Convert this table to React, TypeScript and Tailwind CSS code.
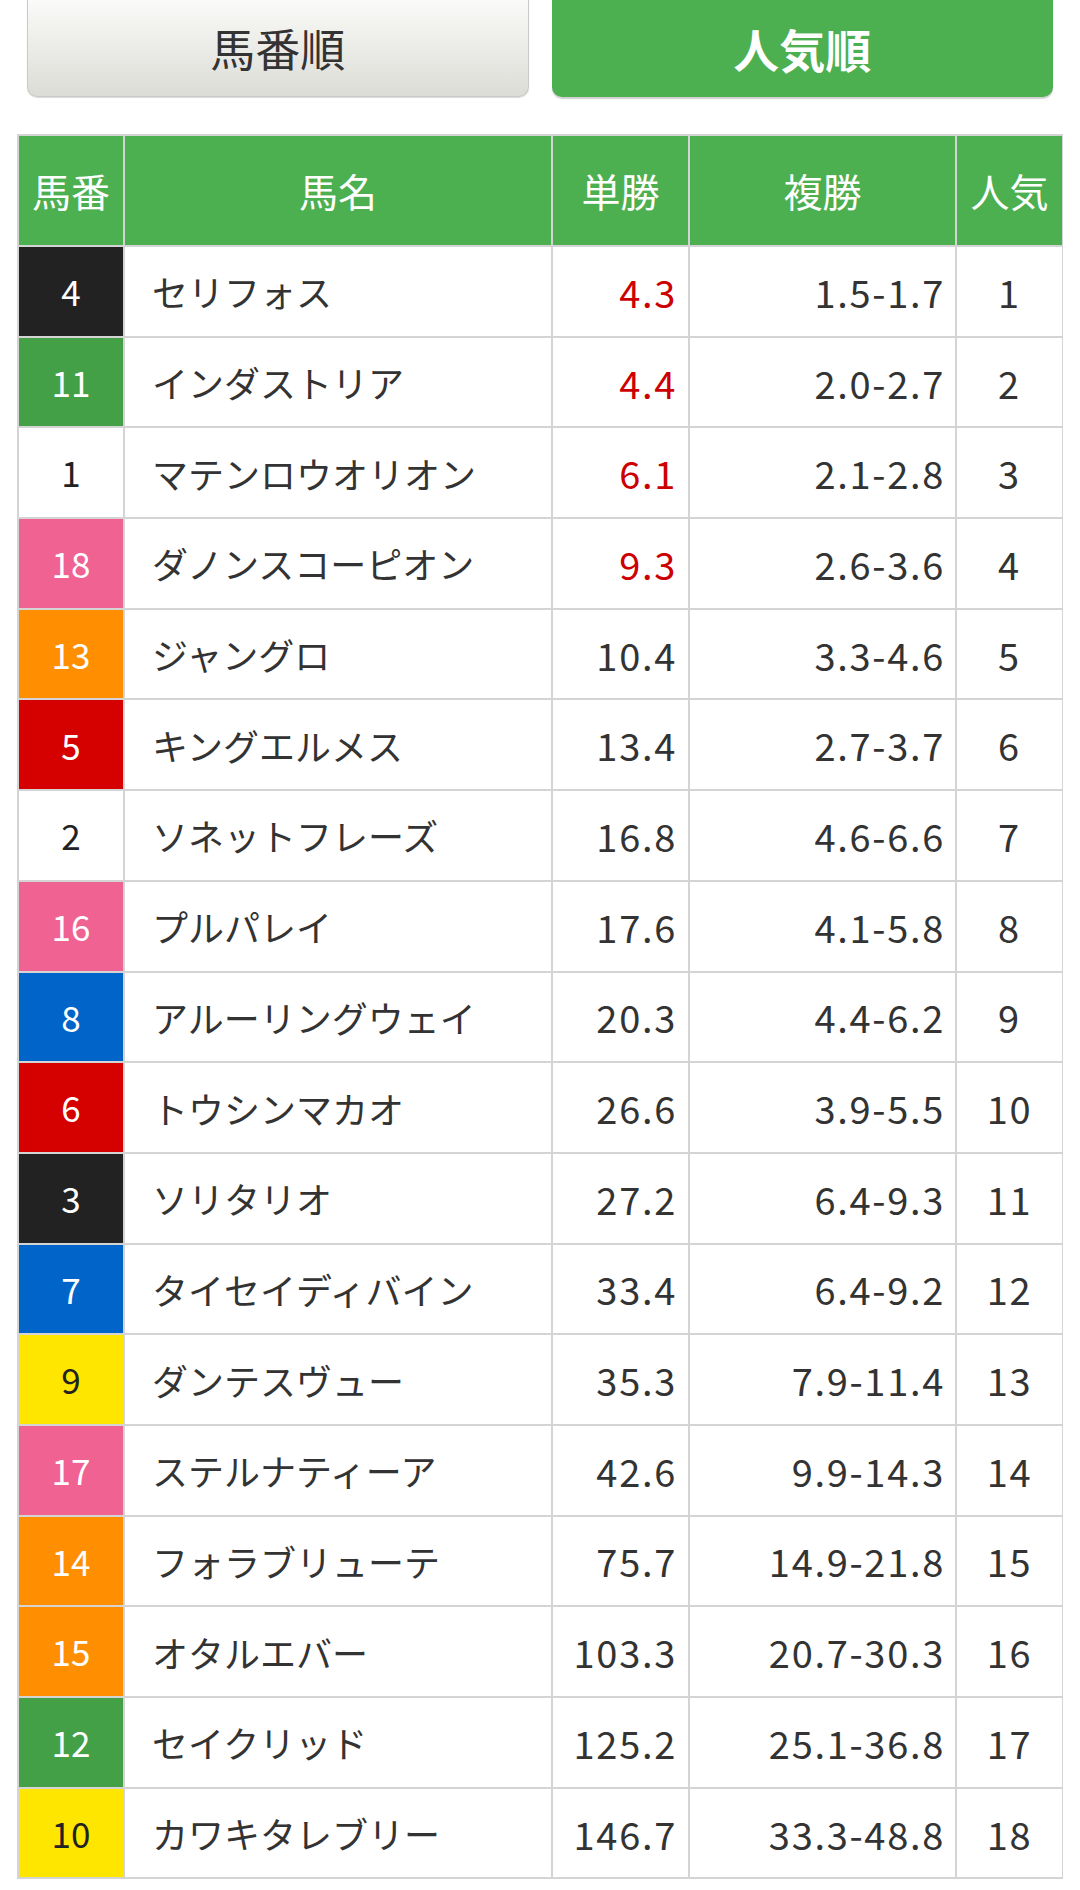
import React from 'react';

type Row = {
  waku: string;
  num: number;
  name: string;
  win: string;
  place: string;
  pop: number;
};

// waku colour -> cell classes
const WAKU: Record<string, string> = {
  white: 'bg-white text-[#222]',
  black: 'bg-[#222222] text-white',
  red: 'bg-[#d50000] text-white',
  blue: 'bg-[#0064c8] text-white',
  yellow: 'bg-[#ffe600] text-[#222]',
  green: 'bg-[#43a047] text-white',
  orange: 'bg-[#ff8f00] text-white',
  pink: 'bg-[#f06292] text-white',
};

const rows: Row[] = [
  { waku: 'black', num: 4, name: 'セリフォス', win: '4.3', place: '1.5-1.7', pop: 1 },
  { waku: 'green', num: 11, name: 'インダストリア', win: '4.4', place: '2.0-2.7', pop: 2 },
  { waku: 'white', num: 1, name: 'マテンロウオリオン', win: '6.1', place: '2.1-2.8', pop: 3 },
  { waku: 'pink', num: 18, name: 'ダノンスコーピオン', win: '9.3', place: '2.6-3.6', pop: 4 },
  { waku: 'orange', num: 13, name: 'ジャングロ', win: '10.4', place: '3.3-4.6', pop: 5 },
  { waku: 'red', num: 5, name: 'キングエルメス', win: '13.4', place: '2.7-3.7', pop: 6 },
  { waku: 'white', num: 2, name: 'ソネットフレーズ', win: '16.8', place: '4.6-6.6', pop: 7 },
  { waku: 'pink', num: 16, name: 'プルパレイ', win: '17.6', place: '4.1-5.8', pop: 8 },
  { waku: 'blue', num: 8, name: 'アルーリングウェイ', win: '20.3', place: '4.4-6.2', pop: 9 },
  { waku: 'red', num: 6, name: 'トウシンマカオ', win: '26.6', place: '3.9-5.5', pop: 10 },
  { waku: 'black', num: 3, name: 'ソリタリオ', win: '27.2', place: '6.4-9.3', pop: 11 },
  { waku: 'blue', num: 7, name: 'タイセイディバイン', win: '33.4', place: '6.4-9.2', pop: 12 },
  { waku: 'yellow', num: 9, name: 'ダンテスヴュー', win: '35.3', place: '7.9-11.4', pop: 13 },
  { waku: 'pink', num: 17, name: 'ステルナティーア', win: '42.6', place: '9.9-14.3', pop: 14 },
  { waku: 'orange', num: 14, name: 'フォラブリューテ', win: '75.7', place: '14.9-21.8', pop: 15 },
  { waku: 'orange', num: 15, name: 'オタルエバー', win: '103.3', place: '20.7-30.3', pop: 16 },
  { waku: 'green', num: 12, name: 'セイクリッド', win: '125.2', place: '25.1-36.8', pop: 17 },
  { waku: 'yellow', num: 10, name: 'カワキタレブリー', win: '146.7', place: '33.3-48.8', pop: 18 },
];

const HEADERS = ['馬番', '馬名', '単勝', '複勝', '人気'];

export default function App() {
  return (
    <div
      className="w-[1080px] min-h-[1890px] bg-white text-[#333]"
      style={{ fontFamily: '"Noto Sans CJK JP", "Noto Sans", sans-serif' }}
    >
      {/* ── sort toggle ── */}
      <div className="grid grid-cols-2 gap-[23px] px-[27px]">
        <div className="h-[97px] rounded-b-[10px] border border-t-0 border-[#c9c9c5] bg-gradient-to-b from-[#fafaf8] to-[#dcdcd7] shadow-[0_1px_1px_rgba(0,0,0,0.15)] flex items-center justify-center text-[45px] text-[#333]">
          馬番順
        </div>
        <div className="h-[97px] rounded-b-[10px] bg-[#4caf50] shadow-[0_2px_1px_rgba(0,0,0,0.18)] flex items-center justify-center text-[46px] font-bold text-white">
          人気順
        </div>
      </div>

      {/* ── odds table ── */}
      <div className="mt-[37px] mx-[17px] grid grid-cols-[104px_426px_135px_265px_105px] gap-[2px] p-[2px] bg-[#d4d4d4]">
        {HEADERS.map((h) => (
          <div
            key={h}
            className="h-[109px] bg-[#4caf50] text-white text-[39px] flex items-center justify-center"
          >
            {h}
          </div>
        ))}

        {rows.map((r) => (
          <React.Fragment key={r.num}>
            <div className={`h-[88.7px] flex items-center justify-center text-[35px] ${WAKU[r.waku]}`}>
              {r.num}
            </div>
            <div className="h-[88.7px] bg-white flex items-center pl-[27px] text-[36px]">
              {r.name}
            </div>
            <div
              className={`h-[88.7px] bg-white flex items-center justify-end pr-[11px] text-[38px] tracking-[1.7px] ${
                parseFloat(r.win) < 10 ? 'text-[#cc0000]' : ''
              }`}
            >
              {r.win}
            </div>
            <div className="h-[88.7px] bg-white flex items-center justify-end pr-[10px] text-[38px] tracking-[1.7px]">
              {r.place}
            </div>
            <div className="h-[88.7px] bg-white flex items-center justify-center text-[38px] tracking-[1.7px]">
              {r.pop}
            </div>
          </React.Fragment>
        ))}
      </div>
    </div>
  );
}
